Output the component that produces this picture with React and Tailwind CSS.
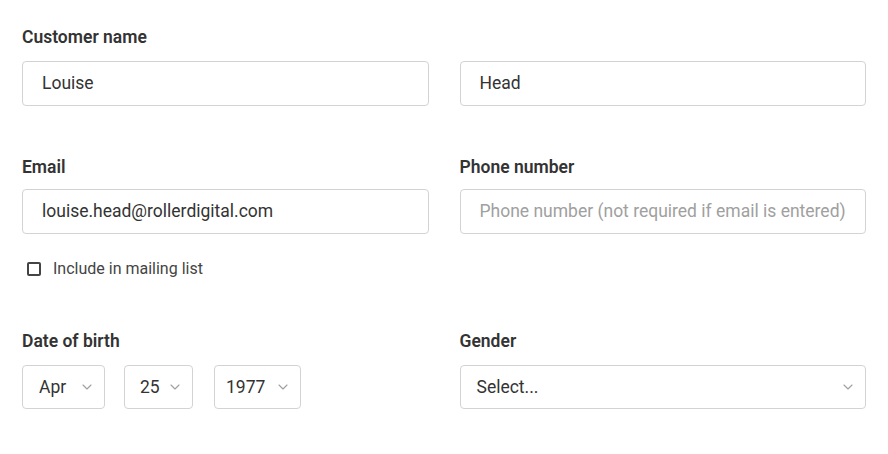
import React, { useState } from 'react';

const Chevron = () => (
    <svg width="10" height="6" viewBox="0 0 10 6" fill="none" className="shrink-0">
        <path d="M1 1l4 4 4-4" stroke="#a0a0a0" strokeWidth="1.1" strokeLinecap="round" strokeLinejoin="round" />
    </svg>
);

const Label = ({ children }) => (
    <label className="block text-[17.5px] leading-[20px] font-semibold text-[#333333] h-5">{children}</label>
);

const TextBox = ({ value, placeholder }) => (
    <div className="h-[45px] border border-[#d3d3d3] rounded-[4px] flex items-center pl-[19px] pr-[12px] bg-white">
        {value
            ? <span className="text-[17.5px] text-[#333333]">{value}</span>
            : <span className="text-[17.5px] text-[#a0a0a0]">{placeholder}</span>}
    </div>
);

// pl differs per box, so the class is passed in whole
const SmallSelect = ({ value, boxClass }) => (
    <div className={`h-[44px] border border-[#d3d3d3] rounded-[4px] flex items-center justify-between pr-[12px] ${boxClass}`}>
        <span className="text-[17.5px] text-[#333333]">{value}</span>
        <Chevron />
    </div>
);

const App = () => {
    const [mailing, setMailing] = useState(false);

    return (
        <div className="w-[888px] h-[454px] bg-white px-[22px] pt-[27px]" style={{ fontFamily: 'Roboto, "Liberation Sans", sans-serif' }}>
            {/* --- NAME ROW --- */}
            <Label>Customer name</Label>
            <div className="grid grid-cols-2 gap-x-[31px] mt-[14px]">
                <TextBox value="Louise" />
                <TextBox value="Head" />
            </div>

            {/* --- CONTACT ROW --- */}
            <div className="grid grid-cols-2 gap-x-[31px] mt-[51px]">
                <div>
                    <Label>Email</Label>
                    <div className="mt-[12px]">
                        <TextBox value="louise.head@rollerdigital.com" />
                    </div>
                    <button onClick={() => setMailing(!mailing)} className="flex items-center mt-[25px] ml-[5px] h-5">
                        <span className="w-[14px] h-[14px] border-2 border-[#444444] rounded-[2px]" />
                        <span className="ml-[12px] text-[16px] leading-5 text-[#444444]">Include in mailing list</span>
                    </button>
                </div>
                <div>
                    <Label>Phone number</Label>
                    <div className="mt-[12px]">
                        <TextBox placeholder="Phone number (not required if email is entered)" />
                    </div>
                </div>
            </div>

            {/* --- DOB / GENDER ROW --- */}
            <div className="grid grid-cols-2 gap-x-[31px] mt-[52px]">
                <div>
                    <Label>Date of birth</Label>
                    <div className="flex mt-[14px]">
                        <SmallSelect value="Apr" boxClass="w-[83px] pl-[16px]" />
                        <SmallSelect value="25" boxClass="w-[69px] pl-[15px] ml-[19px]" />
                        <SmallSelect value="1977" boxClass="w-[87px] pl-[11px] ml-[21px]" />
                    </div>
                </div>
                <div>
                    <Label>Gender</Label>
                    <div className="mt-[14px] h-[44px] border border-[#d3d3d3] rounded-[4px] flex items-center justify-between pl-[16px] pr-[12px]">
                        <span className="text-[17.5px] text-[#333333]">Select...</span>
                        <Chevron />
                    </div>
                </div>
            </div>
        </div>
    );
};

export default App;
